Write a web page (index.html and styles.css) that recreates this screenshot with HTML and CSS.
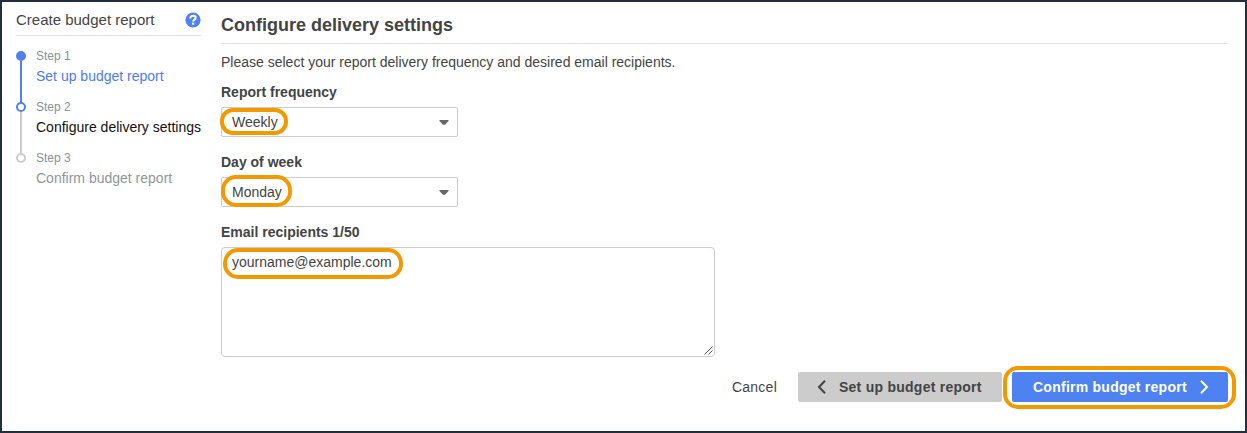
FILE: index.html
```html
<!DOCTYPE html>
<html lang="en">
<head>
<meta charset="utf-8">
<title>Create budget report</title>
<link rel="stylesheet" href="styles.css">
</head>
<body>
<div class="page">
  <aside class="sidebar">
    <header class="sidebar-head">
      <span class="sidebar-title">Create budget report</span>
      <svg class="help" width="16" height="16" viewBox="0 0 16 16"><circle cx="8" cy="8" r="7.6" fill="#4d82f0"/><path d="M5.3 6.4C5.3 4.6 6.4 3.8 8 3.8s2.7.8 2.7 2.2c0 1.6-2.5 1.7-2.5 3.6" fill="none" stroke="#fff" stroke-width="2"/><rect x="7.1" y="10.6" width="2.1" height="2.1" fill="#fff"/></svg>
    </header>
    <ol class="steps">
      <li class="step done"><span class="rail"><i class="dot"></i></span><div><div class="step-no">Step 1</div><div class="step-name">Set up budget report</div></div></li>
      <li class="step current"><span class="rail"><i class="dot"></i></span><div><div class="step-no">Step 2</div><div class="step-name">Configure delivery settings</div></div></li>
      <li class="step"><span class="rail"><i class="dot"></i></span><div><div class="step-no">Step 3</div><div class="step-name">Confirm budget report</div></div></li>
    </ol>
  </aside>
  <main class="main">
    <h1 class="title">Configure delivery settings</h1>
    <p class="intro">Please select your report delivery frequency and desired email recipients.</p>
    <div class="field">
      <div class="label">Report frequency</div>
      <div class="select"><span>Weekly</span><svg class="caret" width="10" height="5" viewBox="0 0 10 5"><path d="M.5 0h9v1L6 4.8H4L.5 1z" fill="#666"/></svg><i class="ring ring-weekly"></i></div>
    </div>
    <div class="field">
      <div class="label">Day of week</div>
      <div class="select"><span>Monday</span><svg class="caret" width="10" height="5" viewBox="0 0 10 5"><path d="M.5 0h9v1L6 4.8H4L.5 1z" fill="#666"/></svg><i class="ring ring-monday"></i></div>
    </div>
    <div class="field">
      <div class="label">Email recipients 1/50</div>
      <div class="textarea"><span class="email">yourname@example.com</span><svg class="grip" width="9" height="9" viewBox="0 0 9 9"><path d="M.5 8.5l8-8M4.5 8.5l4-4" fill="none" stroke="#555" stroke-width="1"/></svg><i class="ring ring-email"></i></div>
    </div>
    <footer class="actions">
      <span class="cancel">Cancel</span>
      <div class="button back"><svg width="9" height="14" viewBox="0 0 9 14"><path d="M8 .8L2 7l6 6.2" fill="none" stroke="#444" stroke-width="2"/></svg><span>Set up budget report</span></div>
      <div class="button confirm"><span>Confirm budget report</span><svg width="9" height="14" viewBox="0 0 9 14"><path d="M1 .8L7 7l-6 6.2" fill="none" stroke="#fff" stroke-width="2"/></svg><i class="ring ring-confirm"></i></div>
    </footer>
  </main>
</div>
</body>
</html>
```
FILE: styles.css
```css
* { box-sizing: border-box; }
body { margin: 0; font: 14px/20px "Liberation Sans", Arial, sans-serif; color: #444; background: #fff; }
.page { display: flex; gap: 20px; width: 1247px; height: 433px; padding: 0 17px 0 14px; border: 2px solid #232f3e; }
.sidebar { width: 185px; flex: none; }
.sidebar-head { display: flex; justify-content: space-between; align-items: center; height: 34px; padding-top: 2px; border-bottom: 1px solid #e1e1e1; }
.sidebar-title { font-size: 15px; }
.steps { list-style: none; margin: 10px 0 0; padding: 0; }
.step { display: flex; gap: 10px; height: 51px; white-space: nowrap; color: #8f9696; }
.rail { position: relative; width: 10px; flex: none; padding-top: 5px; }
.rail::after { content: ""; position: absolute; left: 4px; top: 15px; width: 2px; height: 41px; background: #ccc; }
.step:last-child .rail::after { display: none; }
.done .rail::after { background: #4d82f0; }
.dot { display: block; width: 10px; height: 10px; border: 2px solid #ccc; border-radius: 50%; }
.done .dot { border-color: #4d82f0; background: #4d82f0; }
.current .dot { border-color: #4d82f0; }
.step-no { font-size: 12px; line-height: 20px; color: #879196; }
.step-name { line-height: 20px; }
.done .step-name { color: #4d7cf0; }
.current .step-name { color: #111; }
.main { width: 1007px; flex: none; }
.title { margin: 0; height: 42px; padding-top: 12px; border-bottom: 1px solid #e1e1e1; font-size: 18px; line-height: 22px; }
.intro { margin: 8px 0 10px; }
.field { margin-bottom: 15px; }
.label { font-weight: bold; margin-bottom: 5px; }
.select { position: relative; display: flex; align-items: center; justify-content: space-between; width: 237px; height: 30px; padding: 0 8px 0 10px; border: 1px solid #ccc; border-radius: 2px; }
.caret { margin-top: 1px; }
.textarea { position: relative; width: 494px; height: 110px; padding: 4px 10px; border: 1px solid #ccc; border-radius: 4px; }
.grip { position: absolute; right: 1px; bottom: 1px; }
.actions { display: flex; justify-content: flex-end; align-items: center; }
.cancel { margin-right: 21px; letter-spacing: .25px; }
.button { position: relative; display: flex; align-items: center; height: 30px; border-radius: 2px; font-weight: bold; letter-spacing: .25px; white-space: nowrap; }
.back { width: 204px; margin-right: 10px; padding-left: 19px; gap: 13px; background: #ccc; }
.confirm { width: 216px; padding: 0 19px 0 21px; justify-content: space-between; background: #4d82f0; color: #fff; }
.ring { position: absolute; border: 4px solid #f29900; border-radius: 13px; }
.ring-weekly { left: -2px; top: 0; width: 68px; height: 27px; }
.ring-monday { left: -1px; top: -3px; width: 71px; height: 32px; border-radius: 15px; }
.ring-email { left: 1px; top: 0; width: 180px; height: 31px; border-radius: 15px; }
.ring-confirm { left: -9px; top: -6px; width: 233px; height: 43px; border-radius: 15px; }
```
